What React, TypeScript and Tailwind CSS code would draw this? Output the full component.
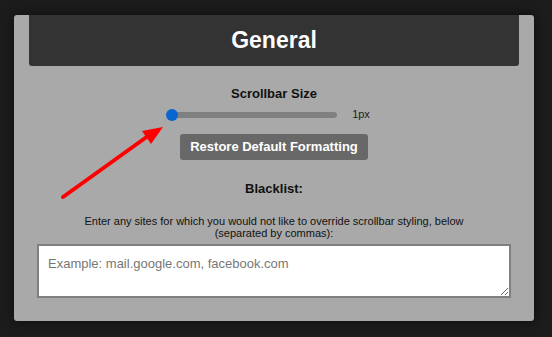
import React from "react";

export default function App() {
  return (
    <div className="min-h-screen bg-[#1c1c1c] pl-[14px] pt-[15px] font-['Liberation_Sans',Arial,sans-serif]">
      <div className="relative flex h-[306px] w-[520px] flex-col items-center rounded-[3px] bg-[#a9a9a9] shadow-[0_0_12px_rgba(0,0,0,0.6)]">
        {/* header */}
        <div className="flex h-[51px] w-[490px] items-center justify-center rounded-b-[3px] bg-[#333333]">
          <h1 className="text-[23px] font-bold leading-none text-white">General</h1>
        </div>

        <h2 className="mt-[20px] text-[13px] font-bold leading-[15px] text-[#111]">
          Scrollbar Size
        </h2>

        <div className="mt-[8px] flex items-center pr-[11px]">
          <div className="relative h-[6px] w-[170px] rounded-full bg-[#808080]">
            <div className="absolute -left-[1px] -top-[3px] h-[12px] w-[12px] rounded-full bg-[#0a66cf]" />
          </div>
          <span className="ml-[15px] text-[11px] leading-none text-[#222]">1px</span>
        </div>

        <button className="mt-[14px] h-[26px] rounded-[3px] bg-[#686868] px-[10px] text-[13px] font-bold text-white">
          Restore Default Formatting
        </button>

        <h2 className="mt-[21px] text-[13px] font-bold leading-[15px] text-[#111]">
          Blacklist:
        </h2>

        <p className="mt-[19px] max-w-[400px] text-center text-[11px] leading-[12px] text-[#111]">
          Enter any sites for which you would not like to override scrollbar styling, below
          (separated by commas):
        </p>

        <textarea
          placeholder="Example: mail.google.com, facebook.com"
          className="mt-[5px] h-[54px] w-[474px] border-2 border-[#808080] bg-white px-[9px] py-[8px] text-[13px] text-[#222] placeholder:text-[#777]"
        />

        {/* pointer arrow */}
        <svg
          className="absolute left-0 top-0"
          width="520"
          height="306"
          viewBox="0 0 520 306"
        >
          <line x1="49" y1="182" x2="134" y2="121" stroke="#ff0000" strokeWidth="4" strokeLinecap="round" />
          <polygon points="149,112 128,116 137,129" fill="#ff0000" />
        </svg>
      </div>
    </div>
  );
}
